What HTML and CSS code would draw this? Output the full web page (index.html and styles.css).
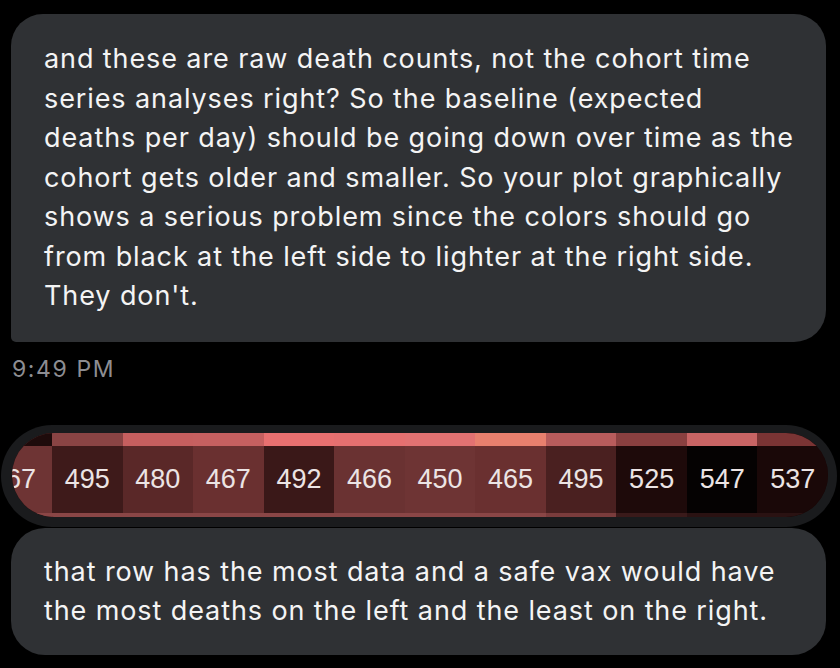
FILE: index.html
```html
<!DOCTYPE html>
<html>
<head>
<meta charset="utf-8">
<link rel="stylesheet" href="styles.css">
</head>
<body>
<div class="thread">
  <div class="bubble bubble-first">and these are raw death counts, not the cohort time<br>series analyses right? So the baseline (expected<br>deaths per day) should be going down over time as the<br>cohort gets older and smaller. So your plot graphically<br>shows a serious problem since the colors should go<br>from black at the left side to lighter at the right side.<br>They don't.</div>
  <div class="timestamp">9:49 PM</div>
  <div class="image-bubble">
    <div class="heatmap">
      <div class="cell c-first" style="--top:#1e0b0b;--main:#6e3434;--bot:#8a4646"><span class="num">67</span></div>
      <div class="cell" style="--top:#8a4444;--main:#3e1a1a;--bot:#8a4646"><span class="num">495</span></div>
      <div class="cell" style="--top:#c65f5f;--main:#5a2828;--bot:#8a4646"><span class="num">480</span></div>
      <div class="cell" style="--top:#c66060;--main:#6a3030;--bot:#8a4646"><span class="num">467</span></div>
      <div class="cell" style="--top:#e87070;--main:#3a1818;--bot:#8a4646"><span class="num">492</span></div>
      <div class="cell" style="--top:#e57070;--main:#6a3232;--bot:#8a4646"><span class="num">466</span></div>
      <div class="cell" style="--top:#e27272;--main:#6e3434;--bot:#8a4646"><span class="num">450</span></div>
      <div class="cell" style="--top:#e8806e;--main:#6a3030;--bot:#8a4646"><span class="num">465</span></div>
      <div class="cell" style="--top:#b85c5c;--main:#4a2020;--bot:#7a3c3c"><span class="num">495</span></div>
      <div class="cell" style="--top:#8a4040;--main:#1e0a0a;--bot:#3a1a1a"><span class="num">525</span></div>
      <div class="cell" style="--top:#c86464;--main:#050202;--bot:#2a1212"><span class="num">547</span></div>
      <div class="cell" style="--top:#7a3434;--main:#1a0808;--bot:#2a1212"><span class="num">537</span></div>
    </div>
  </div>
  <div class="bubble bubble-last">that row has the most data and a safe vax would have<br>the most deaths on the left and the least on the right.</div>
</div>
</body>
</html>
```

FILE: styles.css
```css
html, body {
  margin: 0;
  padding: 0;
  background: #000;
}

.thread {
  width: 840px;
  height: 668px;
  overflow: hidden;
  padding: 14px 0 0 0;
  box-sizing: border-box;
  display: flex;
  flex-direction: column;
  align-items: flex-start;
  font-family: Inter, "Noto Sans", "Liberation Sans", sans-serif;
}

.bubble {
  margin-left: 11px;
  width: 815px;
  box-sizing: border-box;
  background: #2f3134;
  color: #f4f4f4;
  font-size: 27px;
  letter-spacing: 0.9px;
  line-height: 39.5px;
  white-space: nowrap;
  padding: 25px 10px 26px 33px;
  border-radius: 32px;
}

.bubble-first {
  border-bottom-left-radius: 5px;
}

.bubble-last {
  margin-top: 1px;
  padding: 24px 10px 24px 33px;
  border-radius: 34px;
}

.timestamp {
  margin: 14px 0 0 12px;
  height: 26px;
  font-size: 23px;
  letter-spacing: 1.6px;
  line-height: 26px;
  color: #8d8d92;
}

.image-bubble {
  margin-top: 43px;
  margin-left: 1px;
  width: 836px;
  box-sizing: border-box;
  padding: 8px 9px 10px 11px;
  background: #1a1b1d;
  border-radius: 52px;
}

.heatmap {
  display: flex;
  height: 84px;
  border-radius: 42px;
  overflow: hidden;
  background: #1a0808;
}

.cell {
  flex: 1 1 0;
  display: flex;
  align-items: center;
  justify-content: center;
  box-sizing: border-box;
  border-top: 13px solid var(--top);
  border-bottom: 4px solid var(--bot);
  background: var(--main);
}

.c-first {
  flex: 0 0 40px;
  justify-content: flex-end;
  overflow: hidden;
  padding-right: 16px;
}

.num {
  font-family: "Liberation Sans", Arial, sans-serif;
  font-size: 27px;
  color: #ece4e4;
  white-space: nowrap;
}
```
